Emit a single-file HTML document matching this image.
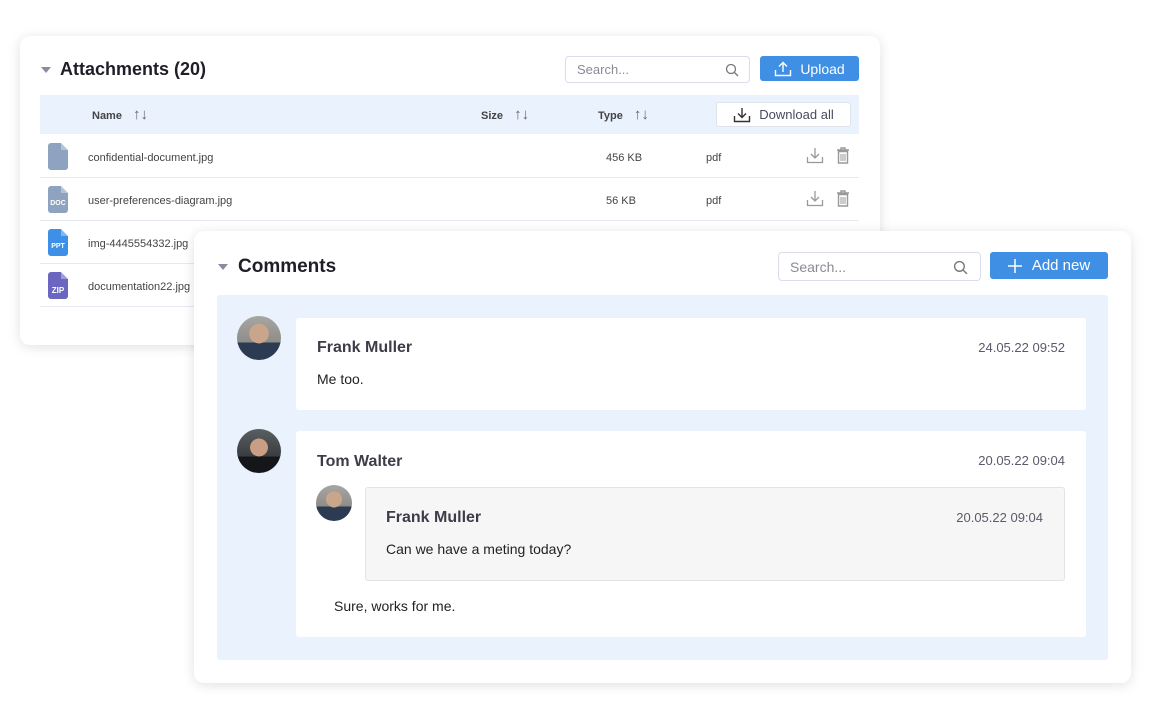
<!DOCTYPE html>
<html><head><meta charset="utf-8"><style>
*{box-sizing:border-box;margin:0;padding:0}
body{width:1151px;height:720px;background:#fff;font-family:"Liberation Sans",sans-serif;position:relative;overflow:hidden;color:#333}
.a{position:absolute}
.card{position:absolute;background:#fff;border-radius:10px;box-shadow:0 2px 12px rgba(0,0,0,.12)}
.tri{position:absolute;width:0;height:0;border-left:5px solid transparent;border-right:5px solid transparent;border-top:6px solid #8a8aa0}
.search{position:absolute;border:1px solid #dcdcea;border-radius:4px;background:#fff;color:#8a8a96;font-size:13px;padding-left:11px;display:flex;align-items:center}
.btn{position:absolute;background:#3f8fe5;color:#fff;border-radius:3px;display:flex;align-items:center;justify-content:center;font-size:14px;gap:8px}
.th{position:absolute;font-size:11px;color:#444;font-weight:bold;top:106px}
.th span{margin-left:8px;font-weight:normal;font-size:15px;color:#666}
.fn{position:absolute;left:88px;font-size:11px;color:#444}
.sep{position:absolute;left:40px;width:819px;height:1px;background:#e6e9f0}
.fi{position:absolute;left:48px;width:20px;height:27px;border-radius:3px;color:#fff;font-size:7px;font-weight:bold;text-align:center;padding-top:14px}
.fi:after{content:"";position:absolute;right:0;top:0;border-left:7px solid rgba(255,255,255,.35);border-top:7px solid #fff}
.av{position:absolute;border-radius:50%;overflow:hidden;background:radial-gradient(circle at 50% 40%,#c9a58c 0 28%,transparent 29%),linear-gradient(#a8a6a2,#8e8c88 60%,#2c3a52 60%)}
.nm{position:absolute;font-size:16px;font-weight:bold;color:#3d3d4a}
.dt{position:absolute;font-size:13px;color:#5a5a6a}
.tx{position:absolute;font-size:14px;color:#222}
</style></head><body>

<div class="card" style="left:20px;top:36px;width:860px;height:309px"></div>
<div class="tri" style="left:41px;top:67px"></div>
<div class="a" style="left:60px;top:59px;font-size:18px;font-weight:bold;color:#1e1e28">Attachments (20)</div>
<div class="search" style="left:565px;top:56px;width:185px;height:27px">Search...
<svg class="a" style="right:10px;top:6px" width="14" height="14" viewBox="0 0 14 14"><circle cx="6" cy="6" r="4.5" fill="none" stroke="#777" stroke-width="1.3"/><path d="M9.5 9.5L13 13" stroke="#777" stroke-width="1.3"/></svg></div>
<div class="btn" style="left:760px;top:56px;width:99px;height:25px"><svg width="18" height="16" viewBox="0 0 18 16"><path d="M9 11V2M5 5.5L9 1.5l4 4M1.5 9v5.5h15V9" fill="none" stroke="#fff" stroke-width="1.4"/></svg>Upload</div>

<div class="a" style="left:40px;top:95px;width:819px;height:39px;background:#eaf2fd"></div>
<div class="th" style="left:92px">Name <span>↑↓</span></div>
<div class="th" style="left:481px">Size <span>↑↓</span></div>
<div class="th" style="left:598px">Type <span>↑↓</span></div>
<div class="a" style="left:716px;top:102px;width:135px;height:25px;background:#fff;border:1px solid #dfe3ec;border-radius:3px;display:flex;align-items:center;justify-content:center;gap:8px;font-size:13px;color:#4a4a60">
<svg width="18" height="16" viewBox="0 0 18 16"><path d="M9 1v9M5 6.5l4 4 4-4M1.5 9v5.5h15V9" fill="none" stroke="#333" stroke-width="1.4"/></svg>Download all</div>

<div class="fi" style="top:143px;background:#8ea3c0"></div>
<div class="fi" style="top:186px;background:#8ea3c0">DOC</div>
<div class="fi" style="top:229px;background:#3e8fe6">PPT</div>
<div class="fi" style="top:272px;background:#6b67c0;font-size:8px">ZIP</div>
<div class="fn" style="top:152px">confidential-document.jpg</div>
<div class="fn" style="top:195px">user-preferences-diagram.jpg</div>
<div class="fn" style="top:238px">img-4445554332.jpg</div>
<div class="fn" style="top:281px">documentation22.jpg</div>
<div class="sep" style="top:177px"></div><div class="sep" style="top:220px"></div><div class="sep" style="top:263px"></div><div class="sep" style="top:306px"></div>
<div class="fn" style="left:606px;top:152px">456 KB</div><div class="fn" style="left:706px;top:152px">pdf</div>
<div class="fn" style="left:606px;top:195px">56 KB</div><div class="fn" style="left:706px;top:195px">pdf</div>
<svg class="a" style="left:806px;top:147px" width="18" height="17" viewBox="0 0 18 17"><path d="M9 1v10M5 7l4 4 4-4M1.5 10v5.5h15V10" fill="none" stroke="#999" stroke-width="1.3"/></svg>
<svg class="a" style="left:836px;top:147px" width="14" height="17" viewBox="0 0 14 17"><path d="M1 3h12M5 3V1h4v2M2.5 4.5h9V16h-9z" fill="none" stroke="#999" stroke-width="1.4"/><path d="M5 7v7M7 7v7M9 7v7" stroke="#999"/></svg>
<svg class="a" style="left:806px;top:190px" width="18" height="17" viewBox="0 0 18 17"><path d="M9 1v10M5 7l4 4 4-4M1.5 10v5.5h15V10" fill="none" stroke="#999" stroke-width="1.3"/></svg>
<svg class="a" style="left:836px;top:190px" width="14" height="17" viewBox="0 0 14 17"><path d="M1 3h12M5 3V1h4v2M2.5 4.5h9V16h-9z" fill="none" stroke="#999" stroke-width="1.4"/><path d="M5 7v7M7 7v7M9 7v7" stroke="#999"/></svg>

<div class="card" style="left:194px;top:231px;width:937px;height:452px"></div>
<div class="tri" style="left:218px;top:264px"></div>
<div class="a" style="left:238px;top:256px;font-size:19px;font-weight:bold;color:#1e1e28">Comments</div>
<div class="search" style="left:778px;top:252px;width:203px;height:29px;font-size:14px">Search...
<svg class="a" style="right:12px;top:7px" width="15" height="15" viewBox="0 0 14 14"><circle cx="6" cy="6" r="4.5" fill="none" stroke="#777" stroke-width="1.3"/><path d="M9.5 9.5L13 13" stroke="#777" stroke-width="1.3"/></svg></div>
<div class="btn" style="left:990px;top:252px;width:118px;height:27px;font-size:15px;gap:10px"><svg width="14" height="14" viewBox="0 0 14 14"><path d="M7 0v14M0 7h14" stroke="#fff" stroke-width="1.5"/></svg>Add new</div>

<div class="a" style="left:217px;top:295px;width:891px;height:365px;background:#eaf2fd;border-radius:3px"></div>
<div class="av" style="left:237px;top:316px;width:44px;height:44px"></div>
<div class="a" style="left:296px;top:318px;width:790px;height:92px;background:#fff;border-radius:3px"></div>
<div class="nm" style="left:317px;top:339px">Frank Muller</div>
<div class="dt" style="right:86px;top:340px">24.05.22 09:52</div>
<div class="tx" style="left:317px;top:371px">Me too.</div>

<div class="av" style="left:237px;top:429px;width:44px;height:44px;background:radial-gradient(circle at 50% 42%,#c99e84 0 26%,transparent 27%),linear-gradient(#5a5f62,#3a3d40 62%,#15161a 62%)"></div>
<div class="a" style="left:296px;top:431px;width:790px;height:206px;background:#fff;border-radius:3px"></div>
<div class="nm" style="left:317px;top:453px">Tom Walter</div>
<div class="dt" style="right:86px;top:453px">20.05.22 09:04</div>
<div class="av" style="left:316px;top:485px;width:36px;height:36px"></div>
<div class="a" style="left:365px;top:487px;width:700px;height:94px;background:#f6f6f6;border:1px solid #e3e3e3;border-radius:3px"></div>
<div class="nm" style="left:386px;top:509px">Frank Muller</div>
<div class="dt" style="right:108px;top:510px">20.05.22 09:04</div>
<div class="tx" style="left:386px;top:541px">Can we have a meting today?</div>
<div class="tx" style="left:334px;top:598px">Sure, works for me.</div>
</body></html>
